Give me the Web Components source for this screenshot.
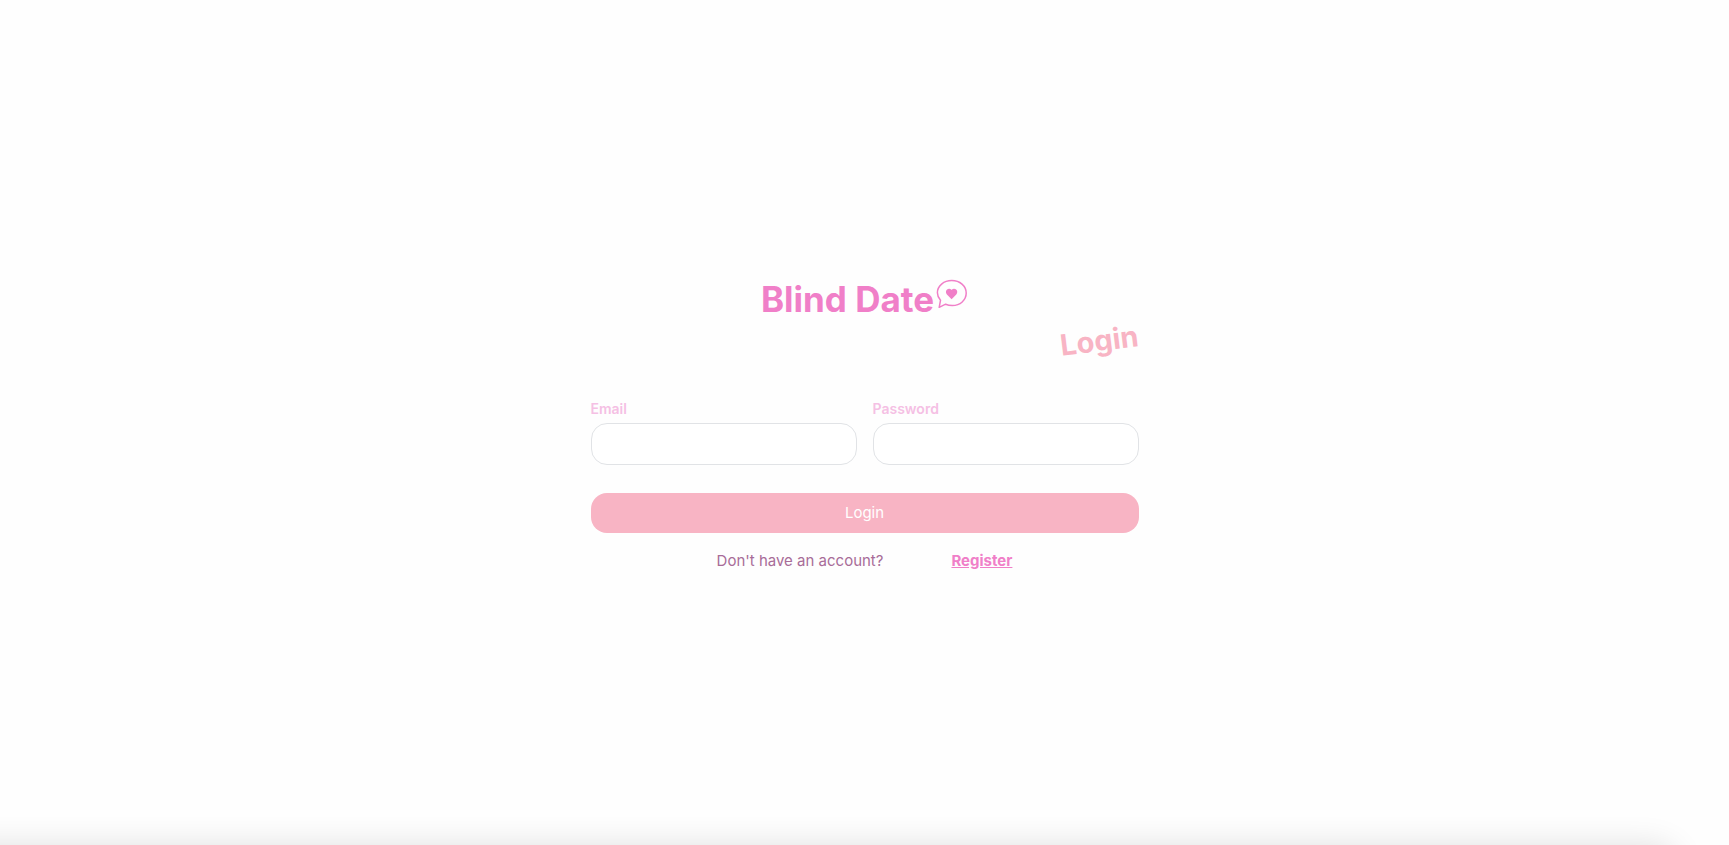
<!DOCTYPE html>
<html lang="en">
<head>
<meta charset="utf-8">
<meta name="viewport" content="width=device-width, initial-scale=1">
<title>Blind Date</title>
<style>
body { margin: 0; background: #fefefe; font-family: Inter, sans-serif; }
</style>
</head>
<body>
<login-page></login-page>
<script>
const define = (name, html, setup) => {
  const template = document.createElement('template');
  template.innerHTML = html;
  customElements.define(name, class extends HTMLElement {
    constructor() {
      super();
      const root = this.attachShadow({ mode: 'open' });
      root.append(template.content.cloneNode(true));
      if (setup) setup(this, root);
    }
  });
};

define('brand-title', `
<style>
:host { display: flex; justify-content: center; color: #f07fc8; }
h1 { margin: 0; font-size: 35px; line-height: 40px; font-weight: 700; }
svg { width: 32px; height: 32px; margin-left: 2px; flex: none; }
</style>
<h1><slot></slot></h1>
<svg viewBox="0 0 32 32" aria-hidden="true">
  <path d="M3.2 28.300 4.500 21.300C2.500 19 1.400 16.500 1.400 13.700 1.400 6.800 7.800 1.600 15.800 1.600S30.200 7 30.200 14.100 24.200 26.500 16.300 26.500C13.800 26.500 11.500 26 9.600 25.200Z" fill="none" stroke="currentColor" stroke-width="1.500" stroke-linejoin="round"/>
  <path d="M15.600 20.200 10.900 15.500C9.700 14.200 9.600 12.100 10.800 10.800 12 9.600 13.900 9.400 15.200 10.500L15.600 10.900 16 10.500C17.300 9.400 19.200 9.600 20.400 10.800 21.600 12.100 21.500 14.200 20.300 15.500Z" fill="currentColor"/>
</svg>`);

define('tilted-heading', `
<style>
:host { display: flex; justify-content: flex-end; color: #f8b4c4; }
h2 { margin: 0; font-size: 29px; line-height: 36px; font-weight: 700; transform: rotate(-7deg); }
</style>
<h2><slot></slot></h2>`);

define('text-field', `
<style>
:host { display: block; min-width: 0; }
label { display: block; margin-bottom: 4px; color: #f5c0e4; font-size: 14px; line-height: 20px; font-weight: 600; }
input { display: block; box-sizing: border-box; width: 100%; height: 42px; padding: 8px 16px; border: 1px solid #e1e3e6; border-radius: 16px; background: #fff; font: inherit; color: #a86c98; }
</style>
<label for="field"><slot></slot></label>
<input id="field">`, (host, root) => {
  root.querySelector('input').type = host.getAttribute('type') || 'text';
});

define('submit-button', `
<style>
:host { display: block; }
button { display: block; width: 100%; padding: 8px 16px; border: 0; border-radius: 16px; background: #f8b4c4; color: #fff; font: inherit; font-size: 15px; line-height: 24px; cursor: pointer; }
</style>
<button type="submit"><slot></slot></button>`);

define('account-prompt', `
<style>
:host { display: flex; justify-content: center; gap: 68px; font-size: 15px; line-height: 24px; color: #a86c98; }
p { margin: 0; }
a { color: #f07fc8; font-weight: 700; text-decoration: underline; }
</style>
<p><slot></slot></p>
<a href="#register">Register</a>`);

define('login-page', `
<style>
:host { display: flex; align-items: center; justify-content: center; box-sizing: border-box; min-height: 100vh; padding: 22px 16px 16px; position: relative; overflow: hidden; }
main { width: 100%; max-width: 548px; }
brand-title { margin-bottom: 4px; }
form { display: grid; grid-template-columns: 1fr 1fr; column-gap: 16px; row-gap: 28px; margin: 40px 0 16px; }
submit-button { grid-column: 1 / -1; }
.shade { position: absolute; top: 100%; left: -60px; right: 52px; height: 120px; border-radius: 24px; box-shadow: 0 0 32px rgba(0, 0, 0, .12); }
</style>
<main>
  <brand-title>Blind Date</brand-title>
  <tilted-heading>Login</tilted-heading>
  <form>
    <text-field type="email">Email</text-field>
    <text-field type="password">Password</text-field>
    <submit-button>Login</submit-button>
  </form>
  <account-prompt>Don't have an account?</account-prompt>
</main>
<div class="shade"></div>`);
</script>
</body>
</html>
